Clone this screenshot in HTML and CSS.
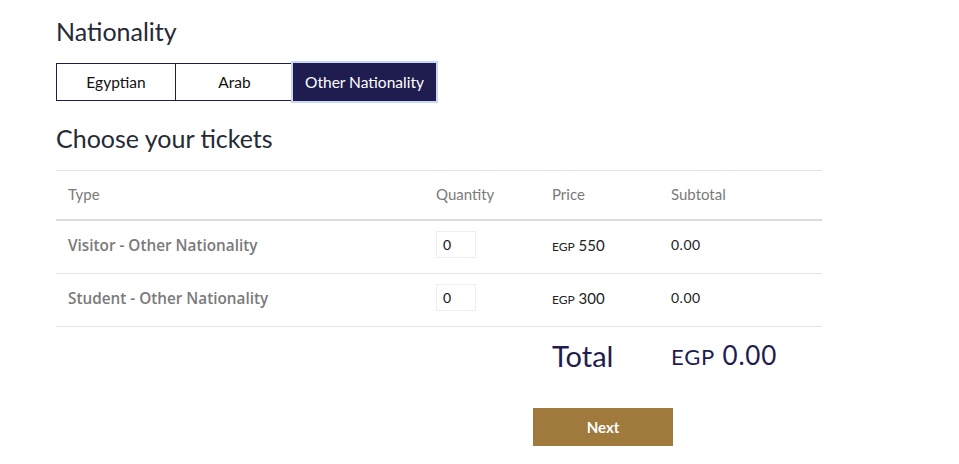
FILE: index.html
```html
<!DOCTYPE html>
<html lang="en">
<head>
<meta charset="UTF-8">
<meta name="viewport" content="width=device-width, initial-scale=1.0">
<title>Tickets</title>
<link rel="stylesheet" href="styles.css">
</head>
<body>

<div class="booking">
    <h2 class="section-title">Nationality</h2>

    <div class="nationality-group">
        <button class="nat-btn">Egyptian</button>
        <button class="nat-btn">Arab</button>
        <button class="nat-btn active">Other Nationality</button>
    </div>

    <h2 class="section-title tickets-title">Choose your tickets</h2>

    <table class="tickets">
        <tr class="head-row">
            <th class="col-type">Type</th>
            <th class="col-qty">Quantity</th>
            <th class="col-price">Price</th>
            <th class="col-sub">Subtotal</th>
        </tr>
        <tr>
            <td class="type">Visitor - Other Nationality</td>
            <td><input class="qty" type="text" value="0"></td>
            <td class="price"><small>EGP</small> 550</td>
            <td class="sub">0.00</td>
        </tr>
        <tr>
            <td class="type">Student - Other Nationality</td>
            <td><input class="qty" type="text" value="0"></td>
            <td class="price"><small>EGP</small> 300</td>
            <td class="sub">0.00</td>
        </tr>
        <tr class="total-row">
            <td></td>
            <td></td>
            <td class="total-label">Total</td>
            <td class="total-value"><span>EGP</span> 0.00</td>
        </tr>
    </table>

    <div class="actions">
        <button class="next-button">Next</button>
    </div>
</div>

</body>
</html>
```

FILE: styles.css
```css
body {
    margin: 0;
    background: #ffffff;
    font-family: "Lato", "Open Sans", sans-serif;
    color: #222;
}

.booking {
    width: 766px;
    padding: 16px 0 0 56px;
}

.section-title {
    font-family: "Lato", sans-serif;
    font-weight: 400;
    font-size: 25px;
    line-height: 30px;
    color: #262a35;
    margin: 0;
}

.nationality-group {
    display: flex;
    margin-top: 17px;
}

.nat-btn {
    font-family: "Lato", sans-serif;
    font-size: 15.5px;
    color: #111;
    background: #fff;
    border: 1px solid #1f1d4a;
    height: 38px;
    padding: 0;
    width: 119px;
    margin-left: -1px;
}

.nat-btn:first-child {
    margin-left: 0;
    width: 120px;
}

.nat-btn.active {
    width: 143px;
    background: #1f1d4f;
    color: #fff;
    border-color: #1f1d4f;
    box-shadow: 0 0 0 2px #c9d6f5;
    position: relative;
}

.tickets-title {
    margin-top: 22px;
}

.tickets {
    width: 766px;
    margin-top: 17px;
    border-collapse: collapse;
    border-top: 1px solid #e2e2e2;
}

.tickets th {
    font-weight: 400;
    font-size: 15px;
    color: #7a7a7a;
    text-align: left;
    height: 46px;
    padding: 0 12px 2px;
    border-bottom: 2px solid #dcdcdc;
}

.tickets td {
    height: 47px;
    padding: 0 12px 5px;
    border-bottom: 1px solid #e4e4e4;
    font-size: 15px;
}

.tickets .col-type { width: 356px; }
.tickets .col-qty { width: 92px; padding-left: 0; }
.tickets .col-price { width: 95px; }

.tickets td:nth-child(2) { padding-left: 0; }

.tickets .type {
    color: #7a7a7a;
    font-family: "Open Sans", sans-serif;
    font-weight: 600;
    font-size: 15.3px;
}

.qty {
    width: 40px;
    height: 27px;
    box-sizing: border-box;
    border: 1px solid #eeeeee;
    padding: 0 6px;
    font-family: "Lato", sans-serif;
    font-size: 14px;
    color: #111;
}

.price, .sub {
    color: #222;
}

.price small {
    font-size: 12px;
}

.tickets .sub {
    font-size: 14px;
    letter-spacing: 0.5px;
}

.tickets .total-row td {
    border-bottom: none;
    height: 56px;
    padding-bottom: 2px;
    color: #1f1d4f;
}

.tickets .total-label {
    font-size: 29px;
}

.tickets .total-value {
    font-size: 26px;
    letter-spacing: 0.8px;
}

.total-value span {
    font-size: 22px;
}

.actions {
    padding: 23px 0 0 477px;
}

.next-button {
    width: 140px;
    height: 38px;
    background-color: #a07a3c;
    border: none;
    color: #fff;
    font-family: "Lato", sans-serif;
    font-weight: 700;
    font-size: 15px;
}
```
